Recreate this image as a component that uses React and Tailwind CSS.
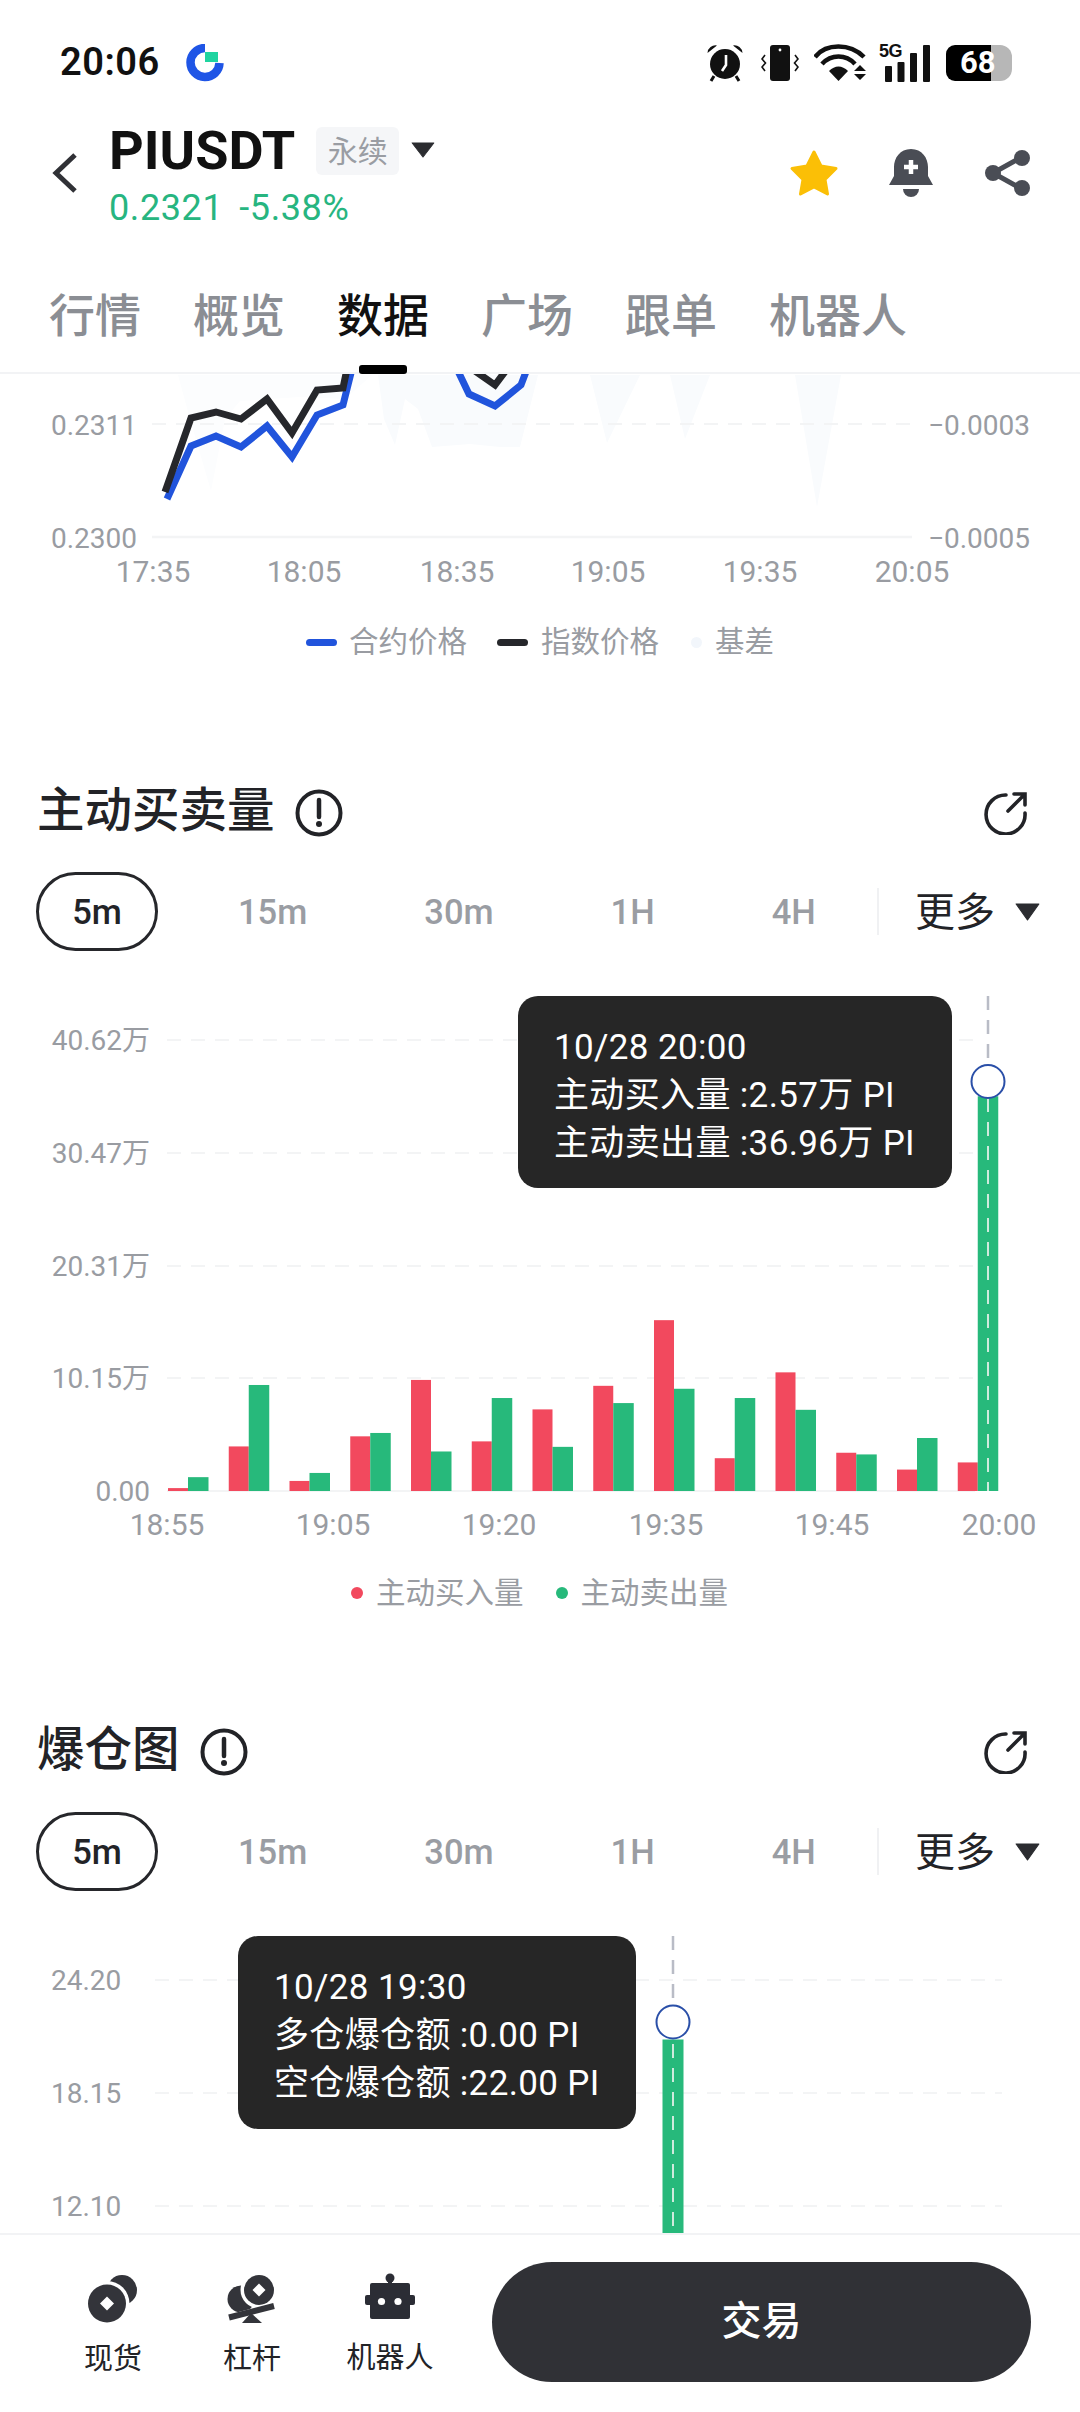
import React from "react";

const BUY = "#f2495e";
const SELL = "#27b97b";

function Caret({ className }) {
  return (
    <svg viewBox="0 0 22 18" className={className} preserveAspectRatio="none">
      <path d="M1 1H21L11 17Z" fill="#2b2c30" stroke="#2b2c30" strokeWidth="1" strokeLinejoin="round" />
    </svg>
  );
}

function StatusBar() {
  return (
    <div className="h-[108px] shrink-0 flex items-center pl-[60px] pr-[68px] text-[#111]">
      <span className="text-[38px] leading-none font-semibold tracking-[0.5px] w-[102px] mt-[16px]">20:06</span>
      <svg viewBox="0 0 38 38" className="w-[38px] h-[38px] ml-[24px] mt-[18px]">
        <path d="M19 4A14.5 14.5 0 1 0 33.5 19" fill="none" stroke="#1f55e6" strokeWidth="8.5" />
        <rect x="19" y="8" width="13" height="10" fill="#1fd4a0" />
      </svg>
      <div className="ml-auto flex items-center mt-[18px]">
        <svg viewBox="0 0 38 38" className="w-[38px] h-[38px]">
          <circle cx="19" cy="20" r="15" fill="#111" />
          <path d="M1.5 9 A8 8 0 0 1 11 1.5Z M36.5 9 A8 8 0 0 0 27 1.5Z" fill="#111" />
          <path d="M8 32 L5 37 M30 32 L33 37" stroke="#111" strokeWidth="3" />
          <path d="M20 11 V21 L16 27" fill="none" stroke="#fff" strokeWidth="2.6" />
        </svg>
        <svg viewBox="0 0 38 38" className="w-[38px] h-[38px] ml-[17px]">
          <rect x="9" y="1" width="20" height="36" rx="3" fill="#111" />
          <circle cx="19" cy="6" r="1.4" fill="#fff" />
          <path d="M4 11 L1 15 L4.5 19 L1 23 L4 27 M34 11 L37 15 L33.5 19 L37 23 L34 27" fill="none" stroke="#111" strokeWidth="1.6" />
        </svg>
        <svg viewBox="0 0 52 38" className="w-[52px] h-[38px] ml-[15px]">
          <path d="M1 13 C12 -1 36 -1 50 13" fill="none" stroke="#111" strokeWidth="4.5" />
          <path d="M8 20 C17 10 32 10 41 20" fill="none" stroke="#111" strokeWidth="4.5" />
          <path d="M15 27 C21 21 28 21 34 27 L24.5 37Z" fill="#111" />
          <path d="M40 27 L46 21 L52 27Z M40 30 H52 L46 36Z" fill="#111" />
        </svg>
        <div className="relative w-[52px] h-[38px] ml-[13px]">
          <span className="absolute left-0 top-[-3px] text-[18px] leading-[20px] font-bold tracking-[-0.5px] font-['Liberation_Sans',sans-serif]">5G</span>
          <svg viewBox="0 0 52 38" className="absolute inset-0 w-[52px] h-[38px]">
            <rect x="6" y="22" width="7" height="16" rx="1" fill="#111" />
            <rect x="18.5" y="18" width="7" height="20" rx="1" fill="#111" />
            <rect x="31" y="9" width="7" height="29" rx="1" fill="#111" />
            <rect x="44" y="1" width="7" height="37" rx="1" fill="#111" />
          </svg>
        </div>
        <div className="relative w-[66px] h-[36px] ml-[15px] flex">
          <div className="w-[45px] h-full bg-black rounded-l-[9px]" />
          <div className="w-[21px] h-full bg-[#b7b7b7] rounded-r-[12px]" />
          <span className="absolute left-[14px] top-0 text-[31px] leading-[36px] font-bold text-white">68</span>
        </div>
      </div>
    </div>
  );
}

function Header() {
  return (
    <div className="h-[100px] shrink-0 flex items-start pl-[52px] pr-[49px] pt-[18px]">
      <svg viewBox="0 0 26 42" className="w-[26px] h-[42px] mt-[26px]">
        <path d="M23 3L4 21L23 39" fill="none" stroke="#303136" strokeWidth="5" />
      </svg>
      <div className="ml-[31px] flex flex-col">
        <div className="flex items-center h-[50px]">
          <span className="text-[54px] leading-none font-bold text-[#111]">PIUSDT</span>
          <span className="ml-[21px] w-[83px] h-[48px] flex items-center justify-center rounded-[6px] bg-[#f5f6f8] text-[30px] text-[#9a9da3]">永续</span>
          <Caret className="ml-[12px] w-[24px] h-[16px] mb-[2px]" />
        </div>
        <div className="mt-[12px] text-[36px] leading-[40px] text-[#27b580] tracking-[0.6px] flex gap-[16px]">
          <span>0.2321</span>
          <span>-5.38%</span>
        </div>
      </div>
      <div className="ml-auto flex items-center h-[94px]">
        <svg viewBox="0 0 50 48" className="w-[50px] h-[48px]">
          <path d="M25 3L32 17L47 19.5L36 30.5L38.5 45L25 38L11.5 45L14 30.5L3 19.5L18 17Z" fill="#fbbf06" stroke="#fbbf06" strokeWidth="3" strokeLinejoin="round" />
        </svg>
        <svg viewBox="0 0 44 48" className="w-[44px] h-[48px] ml-[50px]">
          <path d="M22 0C11 0 5 9 5 18V27L0 36H44L39 27V18C39 9 33 0 22 0Z" fill="#4a4d55" />
          <path d="M14 40H30A8 8 0 0 1 14 40Z" fill="#4a4d55" />
          <path d="M22 11V25M15 18H29" stroke="#fff" strokeWidth="4.5" />
        </svg>
        <svg viewBox="0 0 46 48" className="w-[46px] h-[48px] ml-[52px]">
          <path d="M37 8L8 24L37 40" fill="none" stroke="#4a4d55" strokeWidth="5" />
          <circle cx="8" cy="24" r="8" fill="#4a4d55" />
          <circle cx="37" cy="9" r="8" fill="#4a4d55" />
          <circle cx="37" cy="39" r="8" fill="#4a4d55" />
        </svg>
      </div>
    </div>
  );
}

function Tabs() {
  const tabs = ["行情", "概览", "数据", "广场", "跟单", "机器人"];
  return (
    <div className="h-[97px] shrink-0 flex items-start gap-[52px] pl-[49px] border-b-2 border-[#f2f3f5] pt-[11px]">
      {tabs.map((t) => (
        <div key={t} className="relative h-[84px]">
          <span className={`text-[46px] leading-[56px] font-medium ${t === "数据" ? "text-[#111]" : "text-[#8b8e94]"}`}>{t}</span>
          {t === "数据" && <div className="absolute left-[22px] bottom-[-2px] w-[48px] h-[9px] rounded-[3px] bg-black" />}
        </div>
      ))}
    </div>
  );
}

function BasisChart() {
  const g = "#f3f4f5";
  const pale = "#f9fbfd";
  return (
    <svg viewBox="0 375 1080 215" className="block w-[1080px] h-[215px]">
      <path d="M178 376L190 420L211 492L225 420L240 402L300 398L345 400L372 376Z" fill="#fcfdfe" />
      <path d="M378 376L384 420L395 446L405 400L418 410L432 448L470 445L500 448L520 448L538 376Z" fill={pale} />
      <path d="M590 376L607 444L640 376Z M670 376L685 440L710 376Z M795 376L817 508L841 376Z" fill={pale} />
      <path d="M152 425H912" stroke={g} strokeWidth="2" strokeDasharray="14 10" />
      <path d="M152 538H912" stroke={g} strokeWidth="2.5" />
      <polyline points="167,500 191,447 216,437 241,448 267,427 292,458 317,416 343,406 352,370" fill="none" stroke="#2154dc" strokeWidth="7" />
      <polyline points="457,370 469,395 495,407 521,386 527,370" fill="none" stroke="#2154dc" strokeWidth="7" />
      <polyline points="165,493 191,419 216,413 241,420 267,400 292,434 317,391 343,389 347,370" fill="none" stroke="#26272b" strokeWidth="7" />
      <polyline points="475,372 495,386 507,370" fill="none" stroke="#26272b" strokeWidth="7" />
      <g fontSize="28" fill="#999ca2">
        <text x="51" y="436">0.2311</text>
        <text x="51" y="549">0.2300</text>
        <text x="1030" y="436" textAnchor="end">−0.0003</text>
        <text x="1030" y="549" textAnchor="end">−0.0005</text>
        {[["17:35", 153], ["18:05", 304], ["18:35", 457], ["19:05", 608], ["19:35", 760], ["20:05", 912]].map(([t, x]) => (
          <text key={t} x={x} y="583" textAnchor="middle" fontSize="30">{t}</text>
        ))}
      </g>
    </svg>
  );
}

function Title({ children }) {
  return (
    <div className="h-[60px] flex items-center pl-[37px] pr-[52px]">
      <span className="text-[47.5px] leading-[60px] font-medium text-[#222327]">{children}</span>
      <svg viewBox="0 0 48 48" className="w-[48px] h-[48px] ml-[20px] mt-[3px]">
        <circle cx="24" cy="24" r="21.5" fill="none" stroke="#222327" strokeWidth="4" />
        <path d="M24 11V28" stroke="#222327" strokeWidth="4.5" strokeLinecap="round" />
        <circle cx="24" cy="35" r="3" fill="#222327" />
      </svg>
      <svg viewBox="0 0 44 44" className="w-[44px] h-[44px] ml-auto mt-[4px]">
        <path d="M22 4A19.5 19.5 0 1 0 41 22" fill="none" stroke="#222327" strokeWidth="3.6" strokeLinecap="round" />
        <path d="M24 20L40 4M30 3H41V14" fill="none" stroke="#222327" strokeWidth="3.6" strokeLinecap="round" />
      </svg>
    </div>
  );
}

function Ranges() {
  const items = ["15m", "30m", "1H", "4H"];
  return (
    <div className="h-[79px] flex items-center pl-[36px] text-[34.5px] font-medium">
      <div className="h-[79px] w-[122px] flex items-center justify-center rounded-[40px] border-[3px] border-[#26272b] text-[#222327]">
        <span className="mt-[2px]">5m</span>
      </div>
      <div className="flex items-center gap-[117px] ml-[80px] mt-[2px] text-[#9a9da3]">
        {items.map((t) => (
          <span key={t}>{t}</span>
        ))}
      </div>
      <div className="w-[2px] h-[47px] bg-[#f0f1f3] ml-auto" />
      <span className="ml-[36px] mt-[2px] text-[40px] font-normal text-[#222327]">更多</span>
      <Caret className="ml-[20px] mr-[40px] w-[25px] h-[18px] mt-[1px]" />
    </div>
  );
}

function Tooltip({ className, lines }) {
  return (
    <div className={`absolute rounded-[20px] bg-[#262626] text-white text-[35px] tracking-[0.35px] leading-[48px] pl-[36px] pt-[28px] ${className}`}>
      {lines.map((l) => (
        <div key={l} className="whitespace-nowrap">{l}</div>
      ))}
    </div>
  );
}

const ticks = [
  [1231, 1205], [1132, 986], [1214, 1195], [1108, 1100], [974, 1144], [1120, 1017], [1044, 1133],
  [988, 1029], [832, 995], [1160, 1017], [956, 1045], [1147, 1151], [1187, 1112], [1170, 300],
];

function VolumeChart() {
  const toY = (z) => 970 + z / 2.376;
  const grid = "#f3f4f5";
  return (
    <div className="relative h-[570px] mt-[29px]">
      <svg viewBox="0 980 1080 570" className="block w-[1080px] h-[570px]">
        {[[1040, "40.62万"], [1153, "30.47万"], [1266, "20.31万"], [1378, "10.15万"], [1491, "0.00"]].map(([y, t], i) => (
          <g key={t}>
            <path d={`M167 ${y}H975`} stroke={grid} strokeWidth="2" strokeDasharray={i === 4 ? "none" : "14 10"} />
            <text x="150" y={y + 10} textAnchor="end" fontSize="28" fill="#999ca2">{t}</text>
          </g>
        ))}
        {ticks.map(([r, s], i) => {
          const x = 168 + i * 60.75;
          return (
            <g key={i}>
              <rect x={x} y={toY(r)} width="20" height={1491 - toY(r)} fill={BUY} />
              <rect x={x + 20} y={toY(s)} width="20.5" height={1491 - toY(s)} fill={SELL} />
            </g>
          );
        })}
        <path d="M988 996V1065" stroke="#b9bcc6" strokeWidth="2.5" strokeDasharray="14 10" />
        <path d="M988 1098V1491" stroke="#cfeadd" strokeWidth="2" strokeDasharray="14 10" />
        <circle cx="988" cy="1081.5" r="16.5" fill="#fff" stroke="#2a4fa8" strokeWidth="2" />
        {[["18:55", 167], ["19:05", 333], ["19:20", 499], ["19:35", 666], ["19:45", 832], ["20:00", 999]].map(([t, x]) => (
          <text key={t} x={x} y="1535" textAnchor="middle" fontSize="30" fill="#999ca2">{t}</text>
        ))}
      </svg>
      <Tooltip
        className="left-[518px] top-[16px] w-[434px] h-[192px]"
        lines={["10/28 20:00", "主动买入量 :2.57万 PI", "主动卖出量 :36.96万 PI"]}
      />
    </div>
  );
}

function LiquidationChart() {
  const grid = "#f3f4f5";
  return (
    <div className="relative h-[320px] mt-[30px]">
      <svg viewBox="0 1921 1080 320" className="block w-[1080px] h-[320px]">
        {[[1980, "24.20"], [2093, "18.15"], [2206, "12.10"]].map(([y, t]) => (
          <g key={t}>
            <path d={`M155 ${y}H1002`} stroke={grid} strokeWidth="2" strokeDasharray="14 10" />
            <text x="51" y={y + 10} fontSize="28" fill="#999ca2">{t}</text>
          </g>
        ))}
        <rect x="662.5" y="2039.5" width="21" height="200" fill={SELL} />
        <path d="M673 1936V2006" stroke="#b9bcc6" strokeWidth="2.5" strokeDasharray="14 10" />
        <path d="M673 2044V2240" stroke="#cfeadd" strokeWidth="2" strokeDasharray="14 10" />
        <circle cx="673" cy="2022" r="16.5" fill="#fff" stroke="#2a4fa8" strokeWidth="2" />
      </svg>
      <Tooltip
        className="left-[238px] top-[15px] w-[398px] h-[193px]"
        lines={["10/28 19:30", "多仓爆仓额 :0.00 PI", "空仓爆仓额 :22.00 PI"]}
      />
    </div>
  );
}

function LegendItem({ swatch, label }) {
  return (
    <div className="flex items-center">
      {swatch}
      <span className="text-[29.5px] leading-[50px] text-[#999ca2]">{label}</span>
    </div>
  );
}

function BottomBar() {
  const dark = "#33343a";
  return (
    <div className="relative z-10 h-[179px] shrink-0 flex items-start border-t-2 border-[#f2f3f5] bg-white">
      <div className="flex flex-col items-center w-[58px] ml-[84px] mt-[40px]">
        <svg viewBox="0 0 50 48" className="w-[50px] h-[48px]">
          <circle cx="34" cy="15" r="15" fill={dark} />
          <circle cx="19" cy="28.5" r="22.5" fill="#fff" />
          <circle cx="19" cy="28.5" r="19" fill={dark} />
          <path d="M19 21.5L26 28.5L19 35.5L12 28.5Z" fill="#fff" />
        </svg>
        <span className="text-[29px] leading-[34px] mt-[19px] text-[#222327]">现货</span>
      </div>
      <div className="flex flex-col items-center w-[58px] ml-[81px] mt-[40px]">
        <svg viewBox="0 0 50 48" className="w-[50px] h-[48px]">
          <circle cx="14" cy="24" r="13.5" fill={dark} />
          <circle cx="32" cy="15" r="18.5" fill="#fff" />
          <circle cx="32" cy="15" r="15" fill={dark} />
          <path d="M32 8.5L38.5 15L32 21.5L25.5 15Z" fill="#fff" />
          <path d="M0 40L50 27V33L0 46V33Z" fill="#fff" />
          <path d="M2 42.5L47 31" stroke={dark} strokeWidth="6" />
          <path d="M24 38L35 48H15Z" fill={dark} />
        </svg>
        <span className="text-[29px] leading-[34px] mt-[19px] text-[#222327]">杠杆</span>
      </div>
      <div className="flex flex-col items-center w-[88px] ml-[65px] mt-[37px]">
        <svg viewBox="0 0 50 48" className="w-[50px] h-[48px] mt-[1px]">
          <rect x="23" y="4" width="4" height="8" fill="#2b2d35" />
          <circle cx="25" cy="5" r="4.5" fill="#2b2d35" />
          <rect x="5" y="10" width="40" height="36" rx="2" fill="#2b2d35" />
          <rect x="0" y="22" width="50" height="10" rx="2" fill="#2b2d35" />
          <circle cx="16.5" cy="28.5" r="3.6" fill="#fff" />
          <circle cx="33" cy="28.5" r="3.6" fill="#fff" />
        </svg>
        <span className="text-[29px] leading-[34px] mt-[20px] text-[#222327]">机器人</span>
      </div>
      <button className="ml-[58px] mt-[27px] w-[539px] h-[120px] rounded-[60px] bg-[#303136] text-white text-[40px] font-medium">交易</button>
    </div>
  );
}

export default function App() {
  return (
    <div className="w-[1080px] h-[2412px] flex flex-col overflow-hidden bg-white font-['Roboto','Noto_Sans_CJK_SC',sans-serif]">
      <StatusBar />
      <Header />
      <div className="h-[69px] shrink-0" />
      <Tabs />
      <div className="flex-1 min-h-0 overflow-hidden">
        <BasisChart />
        <div className="flex items-center h-[50px] mt-[28px] pl-[306px]">
          <LegendItem swatch={<span className="w-[31px] h-[7px] rounded-full bg-[#2154dc] mr-[12px]" />} label="合约价格" />
          <div className="w-[30px]" />
          <LegendItem swatch={<span className="w-[31px] h-[7px] rounded-full bg-[#26272b] mr-[13px]" />} label="指数价格" />
          <div className="w-[32px]" />
          <LegendItem swatch={<span className="w-[11px] h-[11px] rounded-full bg-[#f2f6fb] mr-[13px]" />} label="基差" />
        </div>
        <div className="mt-[114px]"><Title>主动买卖量</Title></div>
        <div className="mt-[31px]"><Ranges /></div>
        <VolumeChart />
        <div className="flex items-center h-[50px] mt-[18px] pl-[351px]">
          <LegendItem swatch={<span className="w-[12px] h-[12px] rounded-full mr-[13px] bg-[#f2495e]" />} label="主动买入量" />
          <div className="w-[32px]" />
          <LegendItem swatch={<span className="w-[12px] h-[12px] rounded-full mr-[13px] bg-[#27b97b]" />} label="主动卖出量" />
        </div>
        <div className="mt-[102px]"><Title>爆仓图</Title></div>
        <div className="mt-[32px]"><Ranges /></div>
        <LiquidationChart />
      </div>
      <BottomBar />
    </div>
  );
}
